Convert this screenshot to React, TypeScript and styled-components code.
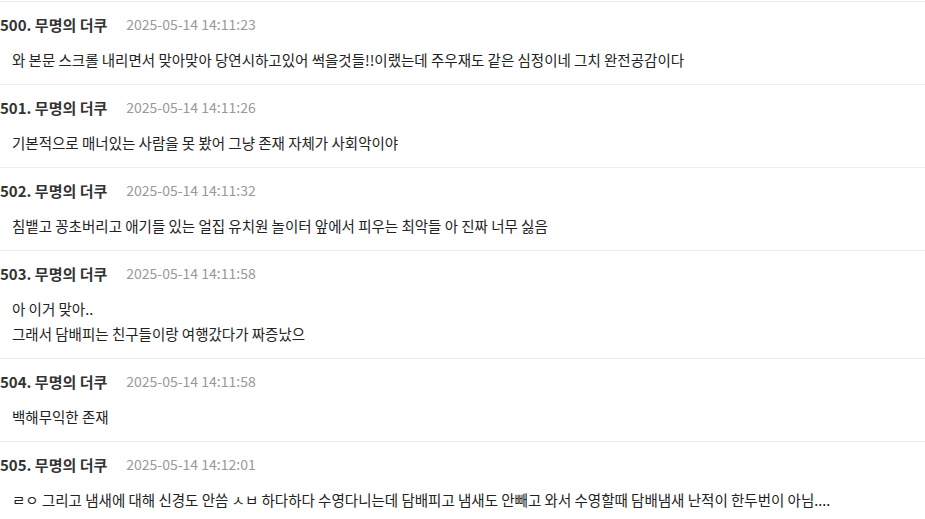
import styled, { createGlobalStyle } from 'styled-components'

const GlobalStyle = createGlobalStyle`
  body {
    margin: 0;
    background: #fff;
    font-family: "Noto Sans CJK KR", "Noto Sans", sans-serif;
  }
`

type Comment = {
  no: number
  name: string
  date: string
  lines: string[]
}

const comments: Comment[] = [
  {
    no: 500,
    name: '무명의 더쿠',
    date: '2025-05-14 14:11:23',
    lines: ['와 본문 스크롤 내리면서 맞아맞아 당연시하고있어 썩을것들!!이랬는데 주우재도 같은 심정이네 그치 완전공감이다'],
  },
  {
    no: 501,
    name: '무명의 더쿠',
    date: '2025-05-14 14:11:26',
    lines: ['기본적으로 매너있는 사람을 못 봤어 그냥 존재 자체가 사회악이야'],
  },
  {
    no: 502,
    name: '무명의 더쿠',
    date: '2025-05-14 14:11:32',
    lines: ['침뱉고 꽁초버리고 애기들 있는 얼집 유치원 놀이터 앞에서 피우는 최악들 아 진짜 너무 싫음'],
  },
  {
    no: 503,
    name: '무명의 더쿠',
    date: '2025-05-14 14:11:58',
    lines: ['아 이거 맞아..', '그래서 담배피는 친구들이랑 여행갔다가 짜증났으'],
  },
  {
    no: 504,
    name: '무명의 더쿠',
    date: '2025-05-14 14:11:58',
    lines: ['백해무익한 존재'],
  },
  {
    no: 505,
    name: '무명의 더쿠',
    date: '2025-05-14 14:12:01',
    lines: ['ㄹㅇ 그리고 냄새에 대해 신경도 안씀 ㅅㅂ 하다하다 수영다니는데 담배피고 냄새도 안빼고 와서 수영할때 담배냄새 난적이 한두번이 아님....'],
  },
]

const List = styled.ul`
  list-style: none;
  margin: 1px 0 0;
  padding: 0;
  border-top: 1px solid #ececec;
`

const Item = styled.li`
  padding: 12px 0 12px;
  border-bottom: 1px solid #ececec;
`

const Header = styled.div`
  display: flex;
  align-items: center;
  gap: 19px;
  height: 20px;
  margin-bottom: 13px;
`

const Author = styled.span`
  font-size: 15px;
  font-weight: 700;
  color: #333;
`

const DateText = styled.span`
  font-size: 14px;
  color: #999;
`

const Body = styled.div`
  padding-left: 12px;
  font-size: 14.5px;
  line-height: 25px;
  color: #222;
`

const App = () => {
  return (
    <>
      <GlobalStyle />
      <List>
        {comments.map((c) => (
          <Item key={c.no}>
            <Header>
              <Author>
                {c.no}. {c.name}
              </Author>
              <DateText>{c.date}</DateText>
            </Header>
            <Body>
              {c.lines.map((line, i) => (
                <div key={i}>{line}</div>
              ))}
            </Body>
          </Item>
        ))}
      </List>
    </>
  )
}

export default App
